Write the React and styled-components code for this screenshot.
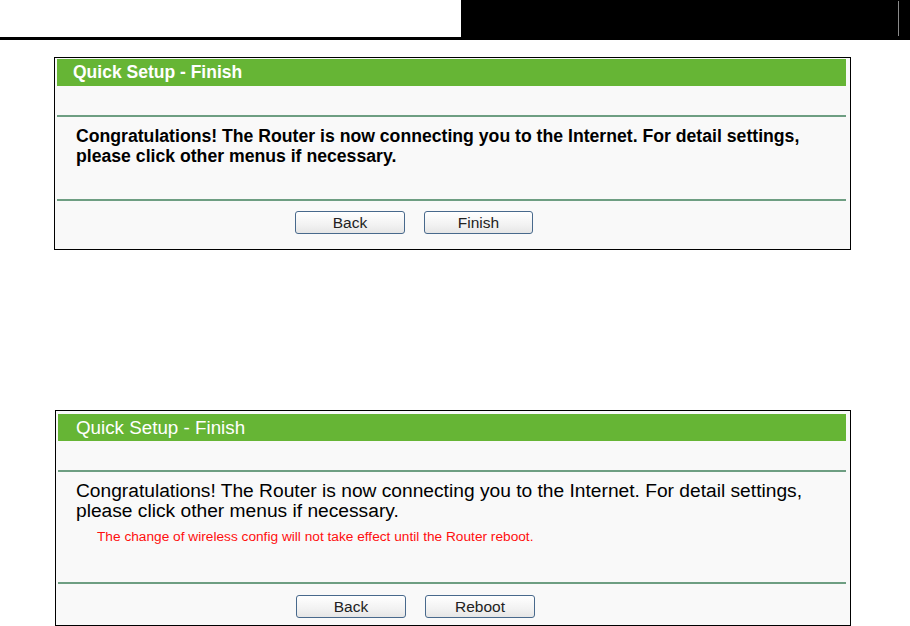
import React from 'react'
import styled, { createGlobalStyle } from 'styled-components'

const GlobalStyle = createGlobalStyle`
  html, body {
    margin: 0;
    padding: 0;
    background: #FFFFFF;
  }
  body {
    font-family: "Liberation Sans", Arial, sans-serif;
    width: 910px;
    height: 626px;
    overflow: hidden;
  }
`

const TopBar = styled.div`
  display: flex;
  height: 37px;
  border-bottom: 3px solid #000000;
`

const Blank = styled.div`
  width: 461px;
  background-color: #FFFFFF;
`

const Band = styled.div`
  flex-grow: 1;
  display: flex;
  justify-content: flex-end;
  padding: 1px 11px 1px 0px;
  background-color: #000000;
`

const BandRule = styled.div`
  width: 1px;
  background-color: #8A8A8A;
`

const Panel = styled.div`
  width: ${p => p.$width}px;
  margin: ${p => p.$top}px 0px 0px ${p => p.$left}px;
  padding: ${p => p.$padTop}px 4px 1px 2px;
  box-sizing: border-box;
  border: 1px solid #000000;
  background-color: #F9F9F9;
  font-weight: ${p => p.$bold ? 'bold' : 'normal'};
`

const Title = styled.div`
  height: 27px;
  display: flex;
  align-items: center;
  padding-left: ${p => p.$indent}px;
  background-color: #66B535;
  color: #FFFFFF;
  font-size: ${p => p.$size}px;
`

const EmptyRow = styled.div`
  height: 29px;
  border-bottom: 2px solid #6E9E82;
`

const Content = styled.div`
  height: ${p => p.$height}px;
  box-sizing: border-box;
  padding: 9px 0px 0px ${p => p.$indent}px;
  border-bottom: 2px solid #6E9E82;
  color: #000000;
`

const Message = styled.p`
  margin: 0;
  font-size: ${p => p.$size}px;
  line-height: 20px;
`

const Warning = styled.p`
  margin: 8px 0px 0px 21px;
  font-size: 13.7px;
  line-height: 16px;
  font-weight: normal;
  color: #FF0F0F;
`

const ButtonRow = styled.div`
  height: ${p => p.$height}px;
  box-sizing: border-box;
  display: flex;
  gap: 19px;
  padding: ${p => p.$padTop}px 0px 0px 238px;
`

const Button = styled.button`
  width: ${p => p.$width}px;
  height: 23px;
  padding: 0;
  border: 1px solid #48698C;
  border-radius: 3px;
  background: linear-gradient(#FFFFFF, #F2F2F2 60%, #E6E6E6);
  font-family: "Liberation Sans", Arial, sans-serif;
  font-size: 15.5px;
  font-weight: normal;
  color: #222222;
  cursor: pointer;
`

const App = () => {
  return (
    <>
      <GlobalStyle />
      <TopBar>
        <Blank />
        <Band>
          <BandRule />
        </Band>
      </TopBar>

      <Panel $width={797} $top={17} $left={54} $padTop={1} $bold>
        <Title $indent={16} $size={17.5}>Quick Setup - Finish</Title>
        <EmptyRow />
        <Content $height={84} $indent={19}>
          <Message $size={17.65}>
            Congratulations! The Router is now connecting you to the Internet. For detail settings,
            <br />
            please click other menus if necessary.
          </Message>
        </Content>
        <ButtonRow $height={47} $padTop={10}>
          <Button $width={110}>Back</Button>
          <Button $width={109}>Finish</Button>
        </ButtonRow>
      </Panel>

      <Panel $width={796} $top={160} $left={55} $padTop={3}>
        <Title $indent={18} $size={18.8}>Quick Setup - Finish</Title>
        <EmptyRow />
        <Content $height={112} $indent={18}>
          <Message $size={19.2}>
            Congratulations! The Router is now connecting you to the Internet. For detail settings,
            <br />
            please click other menus if necessary.
          </Message>
          <Warning>The change of wireless config will not take effect until the Router reboot.</Warning>
        </Content>
        <ButtonRow $height={40} $padTop={11}>
          <Button $width={110}>Back</Button>
          <Button $width={110}>Reboot</Button>
        </ButtonRow>
      </Panel>
    </>
  )
}

export default App
